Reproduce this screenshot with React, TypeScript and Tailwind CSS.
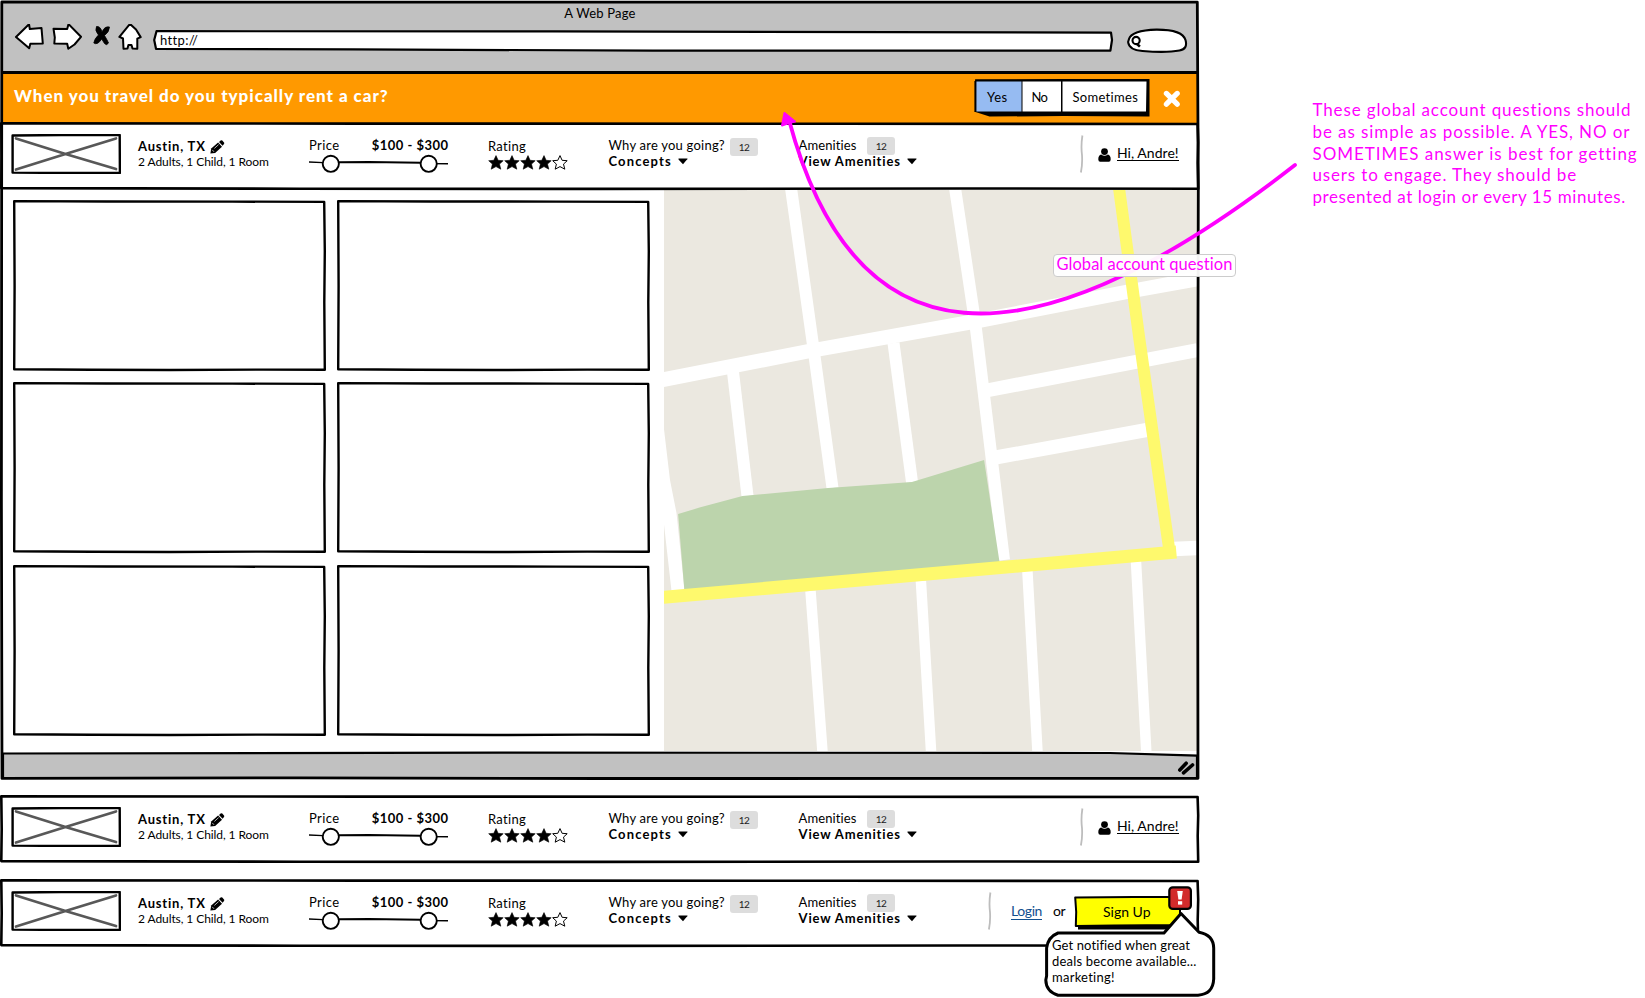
import type { ReactNode } from "react";

/* Hand-drawn rectangle that sits behind a box's content. */
function SketchFrame({ w, h, stroke = 2.6, fill = "none" }: { w: number; h: number; stroke?: number; fill?: string }) {
  const a = stroke / 2;
  const r = w - a;
  const b = h - a;
  const d =
    `M${a} ${a - 0.1} L${w * 0.3} ${a + 0.3} L${w * 0.7} ${a + 0.4} L${r - 0.6} ${a + 0.7} ` +
    `L${r} ${h * 0.3} L${r - 0.5} ${h * 0.6} L${r} ${b} ` +
    `L${w * 0.8} ${b - 0.2} L${w * 0.5} ${b + 0.2} L${w * 0.25} ${b} L${a} ${b - 0.6} L${a + 0.4} ${h * 0.5} Z`;
  return (
    <svg className="pointer-events-none absolute inset-0 overflow-visible" width={w} height={h} viewBox={`0 0 ${w} ${h}`}>
      <path d={d} fill={fill} stroke="#000" strokeWidth={stroke} strokeLinejoin="round" />
    </svg>
  );
}

function ImagePlaceholder() {
  return (
    <svg className="mt-3 shrink-0" width="110" height="40" viewBox="0 0 110 40">
      <path d="M1.6 1.5 L50 1 L108.7 1 L108.9 38.8 L60 39 L1.6 38.6 Z" fill="#fff" stroke="#000" strokeWidth="2.4" strokeLinejoin="round" />
      <path d="M5 4.5 L54.5 20 L105 35 M5 35.5 L54.5 20 L105 4.5" fill="none" stroke="#585858" strokeWidth="2.7" strokeLinecap="round" />
    </svg>
  );
}

function Pencil() {
  return (
    <svg className="mt-[2px] ml-1" width="15" height="14" viewBox="0 0 15 14">
      <path d="M0.4 13.6 L1.2 8.6 L8.1 2.6 L12 6.8 L5.1 13 Z" fill="#000" />
      <path d="M9 1.9 L10.6 0.4 Q11.5 -0.1 12.3 0.6 L14 2.5 Q14.6 3.3 13.8 4.2 L12.6 5.8 Z" fill="#000" />
      <path d="M2.3 9.9 L4 11.8 M4.4 8.4 L8.6 4.6" stroke="#fff" strokeWidth="0.7" />
    </svg>
  );
}

function Slider() {
  return (
    <svg className="block" width="140" height="20" viewBox="0 0 140 20">
      <path d="M0 9 L14 9.6 M119 10.6 L139 10.8" stroke="#000" strokeWidth="1.4" />
      <path d="M30 9.3 L60 9 L112 9.8" fill="none" stroke="#000" strokeWidth="2" />
      <circle cx="21.8" cy="10.8" r="8.1" fill="#fff" stroke="#000" strokeWidth="1.9" />
      <circle cx="119.7" cy="10.8" r="8.1" fill="#fff" stroke="#000" strokeWidth="1.9" />
    </svg>
  );
}

const STAR = "M8 0.6 L10.1 5.3 L15.2 5.7 L11.5 9.1 L12.8 14.2 L8 11.6 L3.2 14.2 L4.4 9.1 L0.7 5.7 L5.8 5.3 Z";

function Stars() {
  return (
    <div className="flex">
      {[true, true, true, true, false].map((on, i) => (
        <svg key={i} width="16" height="15" viewBox="0 0 16 15">
          <path d={STAR} fill={on ? "#000" : "#fff"} stroke="#000" strokeWidth={on ? 0.6 : 1} />
        </svg>
      ))}
    </div>
  );
}

function Caret() {
  return (
    <svg className="mt-[5px] ml-[6px]" width="10" height="7" viewBox="0 0 10 7">
      <path d="M0.5 0.4 H9.5 Q9.6 1.4 8.6 2 L5 6.3 L1.2 2.3 Q0.2 1.5 0.5 0.4 Z" fill="#000" />
    </svg>
  );
}

function Badge({ className }: { className: string }) {
  return (
    <span className={`flex h-[18px] w-7 items-center justify-center rounded-[3px] bg-[#dddddd] text-[10px] tracking-[-0.6px] text-[#222] ${className}`}>
      12
    </span>
  );
}

function Divider() {
  return (
    <svg className="mt-[13px] shrink-0" width="4" height="38" viewBox="0 0 4 38">
      <path d="M2.4 0.5 Q0.8 11 2 20 Q2.6 29 0.9 37.5" fill="none" stroke="#bdbdbd" strokeWidth="1.8" />
    </svg>
  );
}

function AccountGreeting() {
  return (
    <>
      <Divider />
      <svg className="mt-[26px] ml-[14px]" width="13" height="14" viewBox="0 0 13 14">
        <circle cx="6.5" cy="3.6" r="3.4" fill="#000" />
        <path d="M0.3 11.5 Q0.2 7.4 3.2 6.6 Q6.5 9 9.8 6.6 Q12.8 7.4 12.7 11.5 Q12.6 13.7 10.8 13.7 H2.2 Q0.4 13.7 0.3 11.5 Z" fill="#000" />
      </svg>
      <div className="mt-[22px] ml-[6px] h-[17px] border-b border-black text-[14px] leading-[17px] tracking-[0.03px]">Hi, Andre!</div>
    </>
  );
}

function SignUpBubble() {
  return (
    <div className="absolute top-[53px] left-[1044px] h-[66px] w-[172px]">
      <svg className="absolute inset-x-0 -top-[22px]" width="172" height="88" viewBox="0 0 172 88">
        <path
          d="M14 23 H120 L137 3.5 L155 22.2 Q169.5 25 169.7 38 V69 Q169 84.2 154 85.2 H14 Q2 81.5 1.8 70 L2.6 66 V38 Q4 27 14 23 Z"
          fill="#fff"
          stroke="#000"
          strokeWidth="3"
          strokeLinejoin="round"
        />
      </svg>
      <div className="relative pt-[5px] pl-2 text-[13px] leading-4 whitespace-nowrap">
        <div className="tracking-[0.11px]">Get notified when great</div>
        <div className="tracking-[0.2px]">deals become available...</div>
        <div className="tracking-[0.25px]">marketing!</div>
      </div>
    </div>
  );
}

function SignUpArea() {
  return (
    <>
      <Divider />
      <div className="mt-[23px] ml-[19px] h-[18px] border-b border-[#12508f] text-[14px] leading-[18px] tracking-[-0.4px] text-[#12508f]">Login</div>
      <div className="mt-[23px] ml-[11px] text-[14px] leading-[18px] tracking-[-0.5px]">or</div>
      <div className="relative mt-[17px] ml-[9px] h-[34px] w-[108px]">
        <svg className="absolute inset-0" width="108" height="34" viewBox="0 0 108 34">
          <path d="M4 29 L106 28 V33.4 H4 Z" fill="#000" />
          <path d="M1.2 1.4 L60 1 L106 1 V29 L40 29.5 L1.8 30 L2.2 16 Z" fill="#ffff00" stroke="#000" strokeWidth="2" strokeLinejoin="round" />
        </svg>
        <div className="relative pl-[29px] text-[14px] leading-8 tracking-[-0.02px]">Sign Up</div>
      </div>
      <SignUpBubble />
      <svg className="absolute top-[7px] left-[1168px]" width="25" height="25" viewBox="0 0 25 25">
        <rect x="1.3" y="1.3" width="21.6" height="21.6" rx="3.5" fill="#d22b2b" stroke="#000" strokeWidth="2.2" />
        <path d="M9.2 5 H14.8 L13.6 13.6 H10.4 Z" fill="#fff" />
        <rect x="10" y="15.2" width="4.2" height="3.4" fill="#fff" />
      </svg>
    </>
  );
}

function SearchBar({ className, signedIn = true }: { className?: string; signedIn?: boolean }) {
  return (
    <div className={`relative h-[68px] w-[1199.5px] ${className ?? ""}`}>
      <SketchFrame w={1199.5} h={68} fill="#fff" />
      <div className="relative flex items-start pl-[11px] whitespace-nowrap">
        <ImagePlaceholder />
        <div className="mt-4 ml-[17px] w-[171px] shrink-0">
          <div className="flex h-4">
            <span className="text-[13px] leading-4 font-bold tracking-[0.8px]">Austin, TX</span>
            <Pencil />
          </div>
          <div className="text-[12px] leading-[15px] tracking-[-0.08px]">2 Adults, 1 Child, 1 Room</div>
        </div>
        <div className="mt-[15px] w-[179px] shrink-0">
          <div className="flex h-4 w-[139.5px] justify-between text-[13px] leading-4">
            <span className="tracking-[0.4px]">Price</span>
            <span className="font-bold tracking-[0.48px]">$100 - $300</span>
          </div>
          <Slider />
        </div>
        <div className="mt-4 w-[120.5px] shrink-0">
          <div className="h-4 text-[13px] leading-4 tracking-[0.3px]">Rating</div>
          <div className="pt-px"><Stars /></div>
        </div>
        <div className="mt-[15px] w-[190px] shrink-0">
          <div className="flex h-4 text-[13px] leading-4">
            <span className="w-[121.5px] tracking-[0.22px]">Why are you going?</span>
            <Badge className="mt-px" />
          </div>
          <div className="flex text-[13px] leading-4 font-bold">
            <span className="w-[63px] tracking-[1.15px]">Concepts</span>
            <Caret />
          </div>
        </div>
        <div className={`mt-[15px] shrink-0 ${signedIn ? "w-[281.5px]" : "w-[189.5px]"}`}>
          <div className="flex h-4 text-[13px] leading-4">
            <span className="w-[68.5px] tracking-[0.1px]">Amenities</span>
            <Badge className="" />
          </div>
          <div className="flex text-[13px] leading-4 font-bold">
            <span className="w-[102px] tracking-[0.85px]">View Amenities</span>
            <Caret />
          </div>
        </div>
        {signedIn ? <AccountGreeting /> : <SignUpArea />}
      </div>
    </div>
  );
}

function BrowserChrome() {
  return (
    <div className="h-[69px] bg-[#c1c1c1]">
      <div className="h-[22px] pt-px text-center text-[13px] leading-5 tracking-[0.2px]">A Web Page</div>
      <div className="flex">
        <svg width="151" height="36" viewBox="2 24.5 151 36">
          <g fill="#fff" stroke="#000" strokeWidth="2" strokeLinejoin="round">
            <path d="M16 37.5 L29 24.7 L29.8 29.5 L41.5 28.6 L42.8 44 L30.3 44.2 L29.2 48.7 Z" />
            <path d="M81 37.3 L68.5 24.6 L67.2 29.5 L53.5 29.2 L54.8 38 L54.3 44 L67.2 44.3 L68.3 49.3 L74.5 45 Z" />
            <path d="M130 24.4 L119.4 37.4 L123 39 L123.5 49.3 L127.5 49 L128.4 45.5 L131.5 45.5 L132.5 49 L137.3 49.3 L137.3 39.2 L140.7 37.6 L136 30 Z" />
          </g>
          <path d="M96.5 27 Q100.5 26.5 102 32.5 Q104.5 26.5 109.5 27.5 Q109 33 104.5 36 Q107.5 41 108.5 43.5 Q106.5 46.5 104.5 44 L101.7 39.5 Q97.5 46 93.8 43.5 Q94.5 39 98.5 35.5 Q94.5 31 96.5 27 Z" fill="#000" stroke="#000" strokeWidth="0.8" />
        </svg>
        <div className="relative mt-[6px] h-[21px] w-[960px]">
          <svg className="absolute inset-0 overflow-visible" width="960" height="21" viewBox="0 0 960 21">
            <path d="M3.5 1.2 L400 1.4 L958 2.6 L959 10 L957.4 20.6 L500 20.6 L200 19.4 L3 18.8 L1.2 10 Z" fill="#fff" stroke="#000" strokeWidth="2.2" strokeLinejoin="round" />
          </svg>
          <div className="relative pl-[7px] text-[13px] leading-[20px] tracking-[0.35px]">http://</div>
        </div>
        <svg className="mt-1 ml-[14px]" width="62" height="26" viewBox="0.5 0 62 26">
          <path d="M2.5 11 Q5 2.5 30 1.6 Q56 1.5 59 12 Q61.5 21 53 22.5 Q40 25 16 23 Q2.5 22 1.6 14 Z" fill="#fff" stroke="#000" strokeWidth="2.1" />
          <circle cx="9.6" cy="12.5" r="3.6" fill="none" stroke="#000" strokeWidth="2.1" />
          <path d="M10.6 16 L13.4 18.6" stroke="#000" strokeWidth="2.6" />
        </svg>
      </div>
    </div>
  );
}

function QuestionBanner() {
  return (
    <div className="flex h-[52px] items-start border-t-[3px] border-black bg-[#ff9900] pl-[12px]">
      <h1 className="mt-[10px] w-[960px] shrink-0 text-[17px] leading-6 font-black tracking-[0.97px] whitespace-nowrap text-white">
        When you travel do you typically rent a car?
      </h1>
      <div className="relative mt-[6px] h-[38px] w-[177px] shrink-0">
        <svg className="absolute inset-0 overflow-visible" width="177" height="38" viewBox="0.5 0 177 38">
          <path d="M2 0 L176 -1 V36.4 L90 36 L16 36.6 L2 32 Z" fill="#000" />
          <path d="M2.8 1.4 H48 V31.6 H2.8 Z" fill="#96bbf2" />
          <path d="M49 1.4 H87.5 V31.6 H49 Z M89 1.4 H173 L172.5 31.6 H89 Z" fill="#fff" />
          <path d="M1.6 0.2 L90 0 L175 0.2 M1.8 1 V32" stroke="#000" strokeWidth="1.8" />
        </svg>
        <div className="relative flex text-[13px] leading-[34px] whitespace-nowrap">
          <span className="w-[57.5px] pl-[13px] tracking-[0.5px]">Yes</span>
          <span className="w-[41px] tracking-[-0.6px]">No</span>
          <span className="tracking-[0.3px]">Sometimes</span>
        </div>
      </div>
      <svg className="mt-4 ml-[12px]" width="18" height="18" viewBox="0 0 18 18">
        <path d="M3.4 3.4 L14.2 14.2 M14.2 3.4 L3.4 14.2" stroke="#fff" strokeWidth="5.2" strokeLinecap="round" />
      </svg>
    </div>
  );
}

function CityMap() {
  return (
    <svg className="shrink-0" width="533" height="561" viewBox="664.5 190 533 561">
      <rect x="664" y="190" width="534" height="562" fill="#ebe8e0" />
      <g fill="none" stroke="#fff" strokeWidth="12">
        <path d="M791.5 188 L813.5 345 L833 488" />
        <path d="M955.5 188 L976 325 L1004.5 560" />
        <path d="M733.5 372 L748 496" />
        <path d="M894 343 L912.5 482" />
        <path d="M662 380 L812.5 350.5 L975 321.5 L1132 291 L1198 279" strokeWidth="14.5" />
        <path d="M987 390.5 L1198 350" strokeWidth="14" />
        <path d="M996 457.5 L1147 430" strokeWidth="14" />
        <path d="M1174 549 L1198 548" strokeWidth="14.5" />
        <path d="M811 591 L823 752 M921.4 581 L931.6 752 M1027.9 571 L1038 752 M1136.4 560 L1146.8 752" strokeWidth="10.5" />
      </g>
      <path d="M664 425 L670.5 480 L677 513 L685 590 L672 591 L664 520 Z" fill="#fff" />
      <path d="M678.6 514 L700 507.6 L743 496 L828.6 488 L912.5 482 L984.6 460 L1000 562 L685 592 Z" fill="#bcd4ac" />
      <path d="M662 597.5 L1176.8 552" fill="none" stroke="#fef96d" strokeWidth="13" />
      <path d="M1119.5 188 L1140 340 L1170.5 555" fill="none" stroke="#fef96d" strokeWidth="12" />
    </svg>
  );
}

function ResultCard(): ReactNode {
  return (
    <div className="relative h-[171px] w-[313px]">
      <SketchFrame w={313} h={171} stroke={2.4} fill="#fff" />
    </div>
  );
}

function BrowserWindow() {
  return (
    <div className="relative h-[780px] w-[1200px] pt-[2px]">
      <div className="ml-[2px] w-[1196px]">
        <BrowserChrome />
        <QuestionBanner />
      </div>
      <SearchBar className="-mt-px" />
      <div className="flex h-[563px] pl-[13px]">
        <div className="mt-[10px] grid w-[651px] shrink-0 grid-cols-[313px_313px] content-start gap-x-[11px] gap-y-[11.4px]">
          {Array.from({ length: 6 }, (_, i) => (
            <ResultCard key={i} />
          ))}
        </div>
        <CityMap />
      </div>
      <svg className="absolute bottom-0 left-0 overflow-visible" width="1200" height="29" viewBox="0 751 1200 29">
        <path d="M3 753.5 L500 752.6 L1110 753 L1197 755.6 V778 H3 Z" fill="#c1c1c1" stroke="#000" strokeWidth="2.2" />
        <path d="M1179.8 770 L1186.2 763.2 M1183.5 772.8 L1192.5 765" stroke="#000" strokeWidth="3.6" strokeLinecap="round" fill="none" />
      </svg>
      <svg className="pointer-events-none absolute inset-0 overflow-visible" width="1200" height="780" viewBox="0 0 1200 780">
        <path d="M1.8 2 L600 2.2 L1197.3 2.2 L1198.3 190 L1197.6 500 L1198 778.3 L600 778.6 L300 777.8 L2 778.4 L1.4 500 Z" fill="none" stroke="#000" strokeWidth="2.8" strokeLinejoin="round" />
      </svg>
    </div>
  );
}

function Annotation() {
  return (
    <div className="mt-[99px] ml-[112.5px] text-[17px] leading-[21.8px] whitespace-nowrap text-[#ff00ff]">
      <p className="tracking-[0.86px]">These global account questions should</p>
      <p className="tracking-[0.92px]">be as simple as possible. A YES, NO or</p>
      <p className="tracking-[0.98px]">SOMETIMES answer is best for getting</p>
      <p className="tracking-[0.85px]">users to engage. They should be</p>
      <p className="tracking-[0.58px]">presented at login or every 15 minutes.</p>
    </div>
  );
}

export default function App() {
  return (
    <div className="relative flex h-[998px] w-[1645px] items-start overflow-hidden bg-white text-black [font-family:Lato,sans-serif]">
      <div className="w-[1200px] shrink-0">
        <BrowserWindow />
        <SearchBar className="mt-[15px]" />
        <SearchBar className="mt-4" signedIn={false} />
      </div>
      <Annotation />
      <svg className="pointer-events-none absolute inset-0" width="1645" height="998" viewBox="0 0 1645 998">
        <path d="M1295 165 Q886 483 789 120" fill="none" stroke="#ff00ff" strokeWidth="3.8" strokeLinecap="round" />
        <path d="M784.5 113 L795 121.5 L789 123 L782 125.5 Z" fill="#ff00ff" stroke="#ff00ff" strokeWidth="2" strokeLinejoin="round" />
      </svg>
      <div className="absolute top-[254px] left-[1053px] h-[23px] w-[183px] rounded-[4px] border border-[#ccc] bg-white/95 pl-[2.5px] text-[16.5px] leading-[19px] tracking-[0.04px] whitespace-nowrap text-[#ff00ff]">
        Global account question
      </div>
    </div>
  );
}
